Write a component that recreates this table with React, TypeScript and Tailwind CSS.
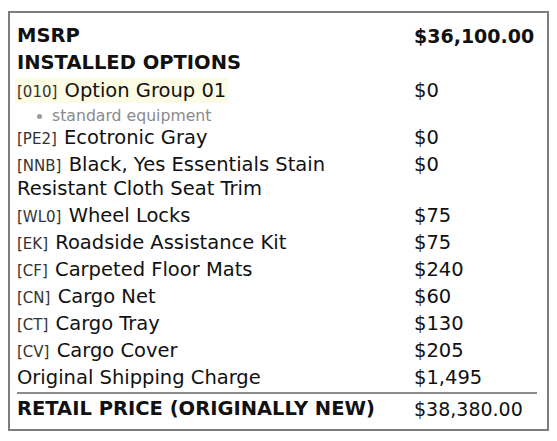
const options = [
  { code: "PE2", name: "Ecotronic Gray", price: "$0" },
  { code: "NNB", name: "Black, Yes Essentials Stain Resistant Cloth Seat Trim", price: "$0" },
  { code: "WL0", name: "Wheel Locks", price: "$75" },
  { code: "EK", name: "Roadside Assistance Kit", price: "$75" },
  { code: "CF", name: "Carpeted Floor Mats", price: "$240" },
  { code: "CN", name: "Cargo Net", price: "$60" },
  { code: "CT", name: "Cargo Tray", price: "$130" },
  { code: "CV", name: "Cargo Cover", price: "$205" },
];

function Code({ code }: { code: string }) {
  return <span className="text-[15px] leading-none text-[#333] mr-[1px]">[{code}]</span>;
}

export default function App() {
  return (
    <div className="bg-white w-[557px] h-[441px] pt-[11px] pl-[8px] font-['DejaVu_Sans',sans-serif] text-[#111]">
      <div className="w-[541px] h-[420px] border-2 border-[#7d7d7d] pl-[7px] pr-[10px] pt-[9px] text-[19.5px] leading-[24px]">
        {/* MSRP */}
        <div className="grid grid-cols-[397px_1fr] py-[1.5px] font-bold">
          <div>MSRP</div>
          <div className="text-[19px]">$36,100.00</div>
        </div>
        <div className="py-[1.5px] font-bold">INSTALLED OPTIONS</div>

        {/* Option group */}
        <div className="grid grid-cols-[397px_1fr] pt-[3px] pb-[1.5px]">
          <div>
            <span className="bg-[#fcfbe3] px-[2px] -mx-[2px] py-[1px]">
              <Code code="010" /> Option Group 01
            </span>
          </div>
          <div>$0</div>
        </div>
        <div className="flex items-center h-[20px] pt-[3px] pl-[20px] gap-[10px] text-[15.7px] leading-[18px] text-[#8a8a8a]">
          <span className="w-[5px] h-[5px] rounded-full bg-[#9a9a9a]" />
          <span>standard equipment</span>
        </div>

        {options.map((o) => (
          <div key={o.code} className="grid grid-cols-[397px_1fr] py-[1.5px]">
            <div className="pr-[20px]">
              <Code code={o.code} /> {o.name}
            </div>
            <div>{o.price}</div>
          </div>
        ))}

        <div className="grid grid-cols-[397px_1fr] py-[1.5px] border-b-2 border-[#8c8c8c]">
          <div>Original Shipping Charge</div>
          <div>$1,495</div>
        </div>

        <div className="grid grid-cols-[397px_1fr] pt-[3px]">
          <div className="font-bold">RETAIL PRICE (ORIGINALLY NEW)</div>
          <div className="text-[19px]">$38,380.00</div>
        </div>
      </div>
    </div>
  );
}
